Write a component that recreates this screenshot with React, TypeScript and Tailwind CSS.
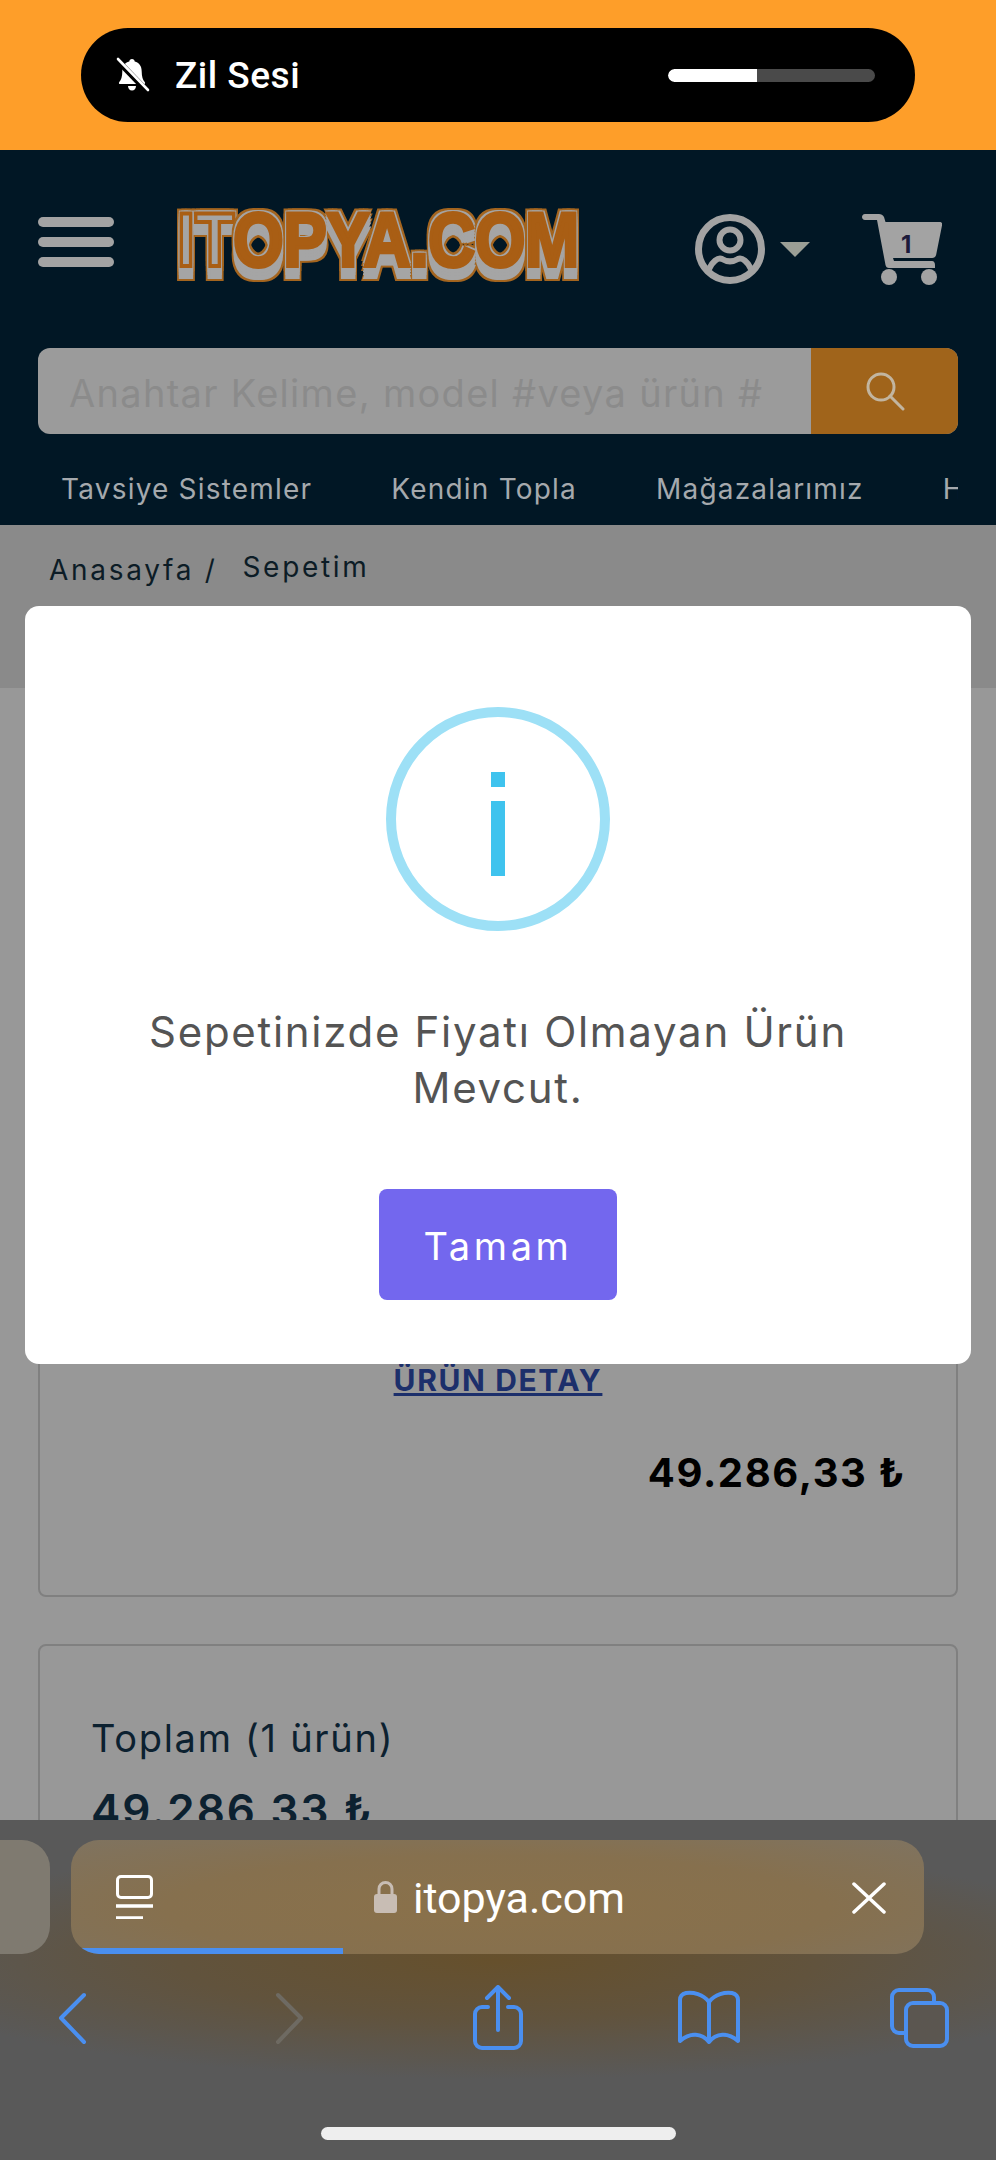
import React from "react";

const sans = "font-['Inter','Noto_Sans',sans-serif]";

function BellOff() {
  return (
    <svg viewBox="0 0 36 36" className="h-[36px] w-[36px]">
      <path d="M18 2c1.600 0 2.600 1.100 2.700 2.600 4.600 1.100 7 4.800 7 9.800 0 5.300 1.200 8.300 3 10.500.8 1 .3 2.100-1 2.100H6.300c-1.300 0-1.800-1.100-1-2.100 1.800-2.200 3-5.200 3-10.500 0-5 2.400-8.700 7-9.800.1-1.500 1.100-2.600 2.700-2.600z" fill="#fff" />
      <path d="M14 29h8c0 2.500-1.700 4.500-4 4.500S14 31.500 14 29z" fill="#fff" />
      <path d="M3 3l30 31" stroke="#000" strokeWidth="6" />
      <path d="M4 2l30 31" stroke="#fff" strokeWidth="2.600" strokeLinecap="round" />
    </svg>
  );
}

function Logo() {
  return (
    <div className="h-[80px] w-[403px]">
      <div className="origin-top-left scale-x-[0.85] whitespace-nowrap font-['Liberation_Sans',sans-serif] text-[76px] leading-[66px] font-bold text-[#a95e14] [-webkit-text-stroke:4px_#a95e14] [text-shadow:3px_0_#a5a5a5,-3px_0_#a5a5a5,0_3px_#a5a5a5,0_-3px_#a5a5a5,3px_3px_#a5a5a5,-3px_-3px_#a5a5a5,3px_-3px_#a5a5a5,-3px_3px_#a5a5a5,0_6px_#a5a5a5,-3px_6px_#a5a5a5,3px_6px_#a5a5a5,0_9px_#a5a5a5,-3px_9px_#a5a5a5,3px_9px_#a5a5a5,0_13px_#a5a5a5,-3px_13px_#a5a5a5,3px_13px_#a5a5a5,5px_0_#a4651f,-5px_0_#a4651f,0_-5px_#a4651f,5px_5px_#a4651f,-5px_-5px_#a4651f,5px_-5px_#a4651f,-5px_5px_#a4651f,-5px_15px_#a4651f,5px_15px_#a4651f,0_15px_#a4651f]">
        <span className="text-[#a5a5a5]">IT</span>OPYA.COM
      </div>
    </div>
  );
}

function User() {
  return (
    <svg viewBox="0 0 70 70" className="h-[70px] w-[70px]" fill="none" stroke="#a3a3a3" strokeWidth="6">
      <circle cx="35" cy="35" r="31.500" strokeWidth="7" />
      <circle cx="35" cy="26" r="10.500" />
      <path d="M14 55C17 48 23 43 27 45c5 3 11 3 16 0 4-2 10 3 13 10" />
    </svg>
  );
}

function Cart() {
  return (
    <svg viewBox="0 0 80 72" className="h-[72px] w-[80px]">
      <path d="M3 1h14c2 0 4 1 5 3l1.500 5h54c2 0 3 1 2.600 3l-6 30c-.5 2-2 3-4 3H31l1 3H70c2 0 3 2 3 4v3H27c-2 0-3-1-3.500-3L15 7H3C1 7 0 5.500 0 4S1 1 3 1z" fill="#a3a3a3" />
      <circle cx="27" cy="64" r="8" fill="#a3a3a3" />
      <circle cx="67" cy="64" r="8" fill="#a3a3a3" />
    </svg>
  );
}

export default function App() {
  return (
    <div className={`relative flex h-[2160px] w-[996px] flex-col overflow-hidden bg-[#989898] ${sans}`}>
      <div className="flex h-[150px] shrink-0 items-start justify-center bg-[#fe9e29] pt-[28px]">
        <div className="flex h-[94px] w-[834px] items-center rounded-[47px] bg-black pl-[33px] pr-[40px]">
          <BellOff />
          <span className="ml-[25px] font-['Roboto',sans-serif] text-[37px] leading-none font-medium tracking-[0.5px] text-white">Zil Sesi</span>
          <div className="ml-auto h-[13px] w-[207px] overflow-hidden rounded-full bg-[#4a4a4a]">
            <div className="h-full w-[89px] rounded-l-full bg-white" />
          </div>
        </div>
      </div>

      <header className="flex h-[375px] shrink-0 flex-col bg-[#011725]">
        <div className="flex h-[198px] shrink-0 items-center pl-[38px] pr-[54px]">
          <div className="mb-[14px] flex w-[76px] flex-col gap-[10px]">
            <div className="h-[10px] rounded-full bg-[#a3a3a3]" />
            <div className="h-[10px] rounded-full bg-[#a3a3a3]" />
            <div className="h-[10px] rounded-full bg-[#a3a3a3]" />
          </div>
          <div className="ml-[63px] mb-[4px]"><Logo /></div>
          <div className="ml-auto"><User /></div>
          <div className="ml-[15px] h-0 w-0 border-x-[15px] border-t-[15px] border-x-transparent border-t-[#9b9f96]" />
          <div className="relative ml-[52px]">
            <Cart />
            <span className="absolute left-[39px] top-[20px] text-[24px] leading-none font-bold text-[#1c1a3a]">1</span>
          </div>
        </div>
        <div className="mx-[38px] flex h-[86px] shrink-0 overflow-hidden rounded-[12px] bg-[#9b9b9b]">
          <div className="flex flex-1 items-center pl-[31px] pt-[5px] text-[38px] tracking-[1.3px] whitespace-nowrap text-[#8b8b8b]">Anahtar Kelime, model #veya ürün #</div>
          <div className="flex w-[147px] shrink-0 items-center justify-center bg-[#a0641b]">
            <svg viewBox="0 0 40 40" className="h-[40px] w-[40px]" fill="none" stroke="#c2b5a0" strokeWidth="3">
              <circle cx="16" cy="16" r="13" />
              <path d="M25 25l13 13" strokeLinecap="round" />
            </svg>
          </div>
        </div>
        <nav className="mr-[38px] flex flex-1 items-center gap-[79px] overflow-hidden pl-[61px] pt-[18px] text-[28px] tracking-[1.2px] whitespace-nowrap text-[#a5a9ad]">
          <span>Tavsiye Sistemler</span>
          <span>Kendin Topla</span>
          <span>Mağazalarımız</span>
          <span>Hakkımızda</span>
        </nav>
      </header>

      <div className="flex h-[163px] shrink-0 items-start gap-[25px] bg-[#8a8a8a] pl-[49px] pt-[21px] text-[28px] tracking-[2.7px] text-[#0c1c26]">
        <span className="mt-[3px]">Anasayfa /</span>
        <span>Sepetim</span>
      </div>

      <main className="flex flex-1 flex-col gap-[47px] px-[38px] pt-[40px]">
        <section className="flex h-[869px] shrink-0 flex-col rounded-[8px] border-2 border-[#808080] px-[50px] pt-[628px]">
          <a className="self-center text-[30px] font-bold tracking-[1.6px] text-[#1c2f6b] underline">ÜRÜN DETAY</a>
          <div className="mt-[40px] self-end text-[40px] font-bold tracking-[1.6px] text-black">49.286,33 ₺</div>
        </section>
        <section className="flex h-[400px] shrink-0 flex-col rounded-[8px] border-2 border-[#808080] px-[51px] pt-[65px] text-[#0c2130]">
          <div className="text-[38px] leading-[54px] tracking-[1.7px]">Toplam (1 ürün)</div>
          <div className="mt-[12px] text-[44px] font-semibold tracking-[2px]">49.286,33 ₺</div>
        </section>
      </main>

      <div className="absolute left-[25px] top-[606px] flex h-[758px] w-[946px] flex-col items-center rounded-[14px] bg-white pt-[101px]">
        <div className="flex h-[224px] w-[224px] items-center justify-center rounded-full border-[10px] border-[#9de0f6]">
          <div className="mt-[9px] flex flex-col items-center gap-[14px]">
            <div className="h-[15px] w-[14px] bg-[#3fc3ee]" />
            <div className="h-[75px] w-[14px] bg-[#3fc3ee]" />
          </div>
        </div>
        <p className="mt-[73px] w-[740px] text-center text-[42px] leading-[56px] tracking-[1.7px] text-[#545454]">Sepetinizde Fiyatı Olmayan Ürün Mevcut.</p>
        <button className="mt-[73px] h-[111px] w-[238px] rounded-[8px] bg-[#7367ee] pt-[3px] text-[38px] tracking-[3.6px] text-white">Tamam</button>
      </div>

      <div className="absolute bottom-0 left-0 h-[340px] w-[996px] bg-[radial-gradient(ellipse_640px_120px_at_50%_41%,#66502c_0%,#61533d_50%,#595959_100%)]">
        <div className="absolute left-[-40px] top-[20px] h-[114px] w-[90px] rounded-[28px] bg-[#7f7a70]" />
        <div className="absolute left-[71px] top-[20px] flex h-[114px] w-[853px] items-center justify-center overflow-hidden rounded-[28px] bg-[radial-gradient(ellipse_at_50%_60%,#8a714a_0%,#86704e_55%,#7f7360_100%)]">
          <svg viewBox="0 0 37 44" className="absolute left-[45px] top-[35px] h-[44px] w-[37px]" fill="none" stroke="#fff" strokeWidth="3">
            <rect x="1.500" y="1.500" width="34" height="21" rx="3.500" />
            <path d="M0 31h37M0 43h27" strokeWidth="3.500" />
          </svg>
          <svg viewBox="0 0 23 32" className="ml-[4px] mr-[16px] h-[32px] w-[23px]">
            <path d="M5 14V8a6.500 6.500 0 0 1 13 0v6" fill="none" stroke="#c8bdb4" strokeWidth="3" />
            <rect x="0" y="13" width="23" height="19" rx="3" fill="#c8bdb4" />
          </svg>
          <span className="pt-[3px] font-['Roboto',sans-serif] text-[43px] leading-none text-white">itopya.com</span>
          <svg viewBox="0 0 34 32" className="absolute right-[38px] top-[42px] h-[32px] w-[34px]" fill="none" stroke="#fff" strokeWidth="3.500" strokeLinecap="round">
            <path d="M2 2l30 28M32 2L2 30" />
          </svg>
          <div className="absolute bottom-0 left-0 h-[6px] w-[272px] bg-[#4a8ff0]" />
        </div>

        <div className="absolute left-0 top-[165px] h-[65px] w-[996px]">
          <svg viewBox="0 0 996 65" className="h-[65px] w-[996px]" fill="none" stroke="#4a8ff0" strokeWidth="4" strokeLinecap="round" strokeLinejoin="round">
            <path d="M84 10L61 33l23 24" />
            <path d="M278 10l23 23-23 24" stroke="#6e6a62" />
            <path d="M488 22h-6a7 7 0 0 0-7 7v27a7 7 0 0 0 7 7h32a7 7 0 0 0 7-7V29a7 7 0 0 0-7-7h-6" />
            <path d="M498 45V3M487 13L498 2l11 11" />
            <path d="M709 17C703 9 693 7 686 8c-4 1-6 3-6 7v41c10-9 22-8 29 1 7-9 19-10 29-1V15c0-4-2-6-6-7-7-1-17 1-23 9zM709 17v40" />
            <rect x="892" y="5" width="42" height="43" rx="7" />
            <rect x="906" y="18" width="41" height="43" rx="7" fill="#5b5650" />
          </svg>
        </div>
        <div className="absolute left-[321px] top-[307px] h-[13px] w-[355px] rounded-full bg-[#eeeeee]" />
      </div>
    </div>
  );
}
